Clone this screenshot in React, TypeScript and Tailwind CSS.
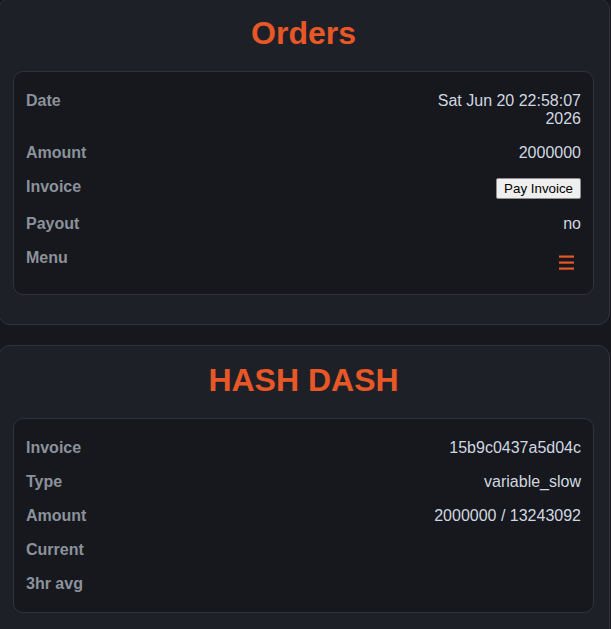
import React from 'react'

type Row = { label: string; value?: React.ReactNode }

function MenuIcon() {
  return (
    <div className="h-[26px] flex items-center mr-[7px]">
      <svg width="15" height="15" viewBox="0 0 15 15" fill="#e85726">
        <rect x="0" y="0.5" width="15" height="2.2" />
        <rect x="0" y="6.5" width="15" height="2.2" />
        <rect x="0" y="12.5" width="15" height="2.2" />
      </svg>
    </div>
  )
}

function InfoRows({ rows }: { rows: Row[] }) {
  return (
    <div className="rounded-[10px] border border-[#30333b] bg-[#16181d] px-3 pt-3 pb-[11px]">
      {rows.map(row => (
        <div key={row.label} className="flex items-start justify-between py-2 leading-[18px]">
          <span className="font-bold text-[#8b929b]">{row.label}</span>
          <div className="text-right text-[#d1d7e0] max-w-[150px]">{row.value}</div>
        </div>
      ))}
    </div>
  )
}

function Card({ title, rows }: { title: string; rows: Row[] }) {
  return (
    <section className="rounded-[12px] border border-[#30333b] bg-[#1e2028] pl-[14px] pr-[15px] pt-4 pb-[29px]">
      <h2 className="text-center text-[32px] leading-[37px] font-bold text-[#e85726] mb-[19px]">{title}</h2>
      <InfoRows rows={rows} />
    </section>
  )
}

export default function App() {
  const orderRows: Row[] = [
    { label: 'Date', value: 'Sat Jun 20 22:58:07 2026' },
    { label: 'Amount', value: '2000000' },
    {
      label: 'Invoice',
      value: (
        <button className="bg-[#efefef] text-black border border-[#8f8f8f] rounded-[2px] px-[7px] py-[2px] text-[13.33px] leading-[15px] cursor-pointer">
          Pay Invoice
        </button>
      ),
    },
    { label: 'Payout', value: 'no' },
    { label: 'Menu', value: <MenuIcon /> },
  ]

  const hashRows: Row[] = [
    { label: 'Invoice', value: '15b9c0437a5d04c' },
    { label: 'Type', value: 'variable_slow' },
    { label: 'Amount', value: <span className="whitespace-nowrap">2000000 / 13243092</span> },
    { label: 'Current', value: '' },
    { label: '3hr avg', value: '' },
  ]

  return (
    <div className="min-h-screen bg-[#16181d] overflow-hidden font-['Liberation_Sans',Arial,sans-serif] text-base">
      <div className="w-[612px] -ml-[2px] -mt-[2px] flex flex-col gap-5">
        <Card title="Orders" rows={orderRows} />
        <Card title="HASH DASH" rows={hashRows} />
      </div>
    </div>
  )
}
